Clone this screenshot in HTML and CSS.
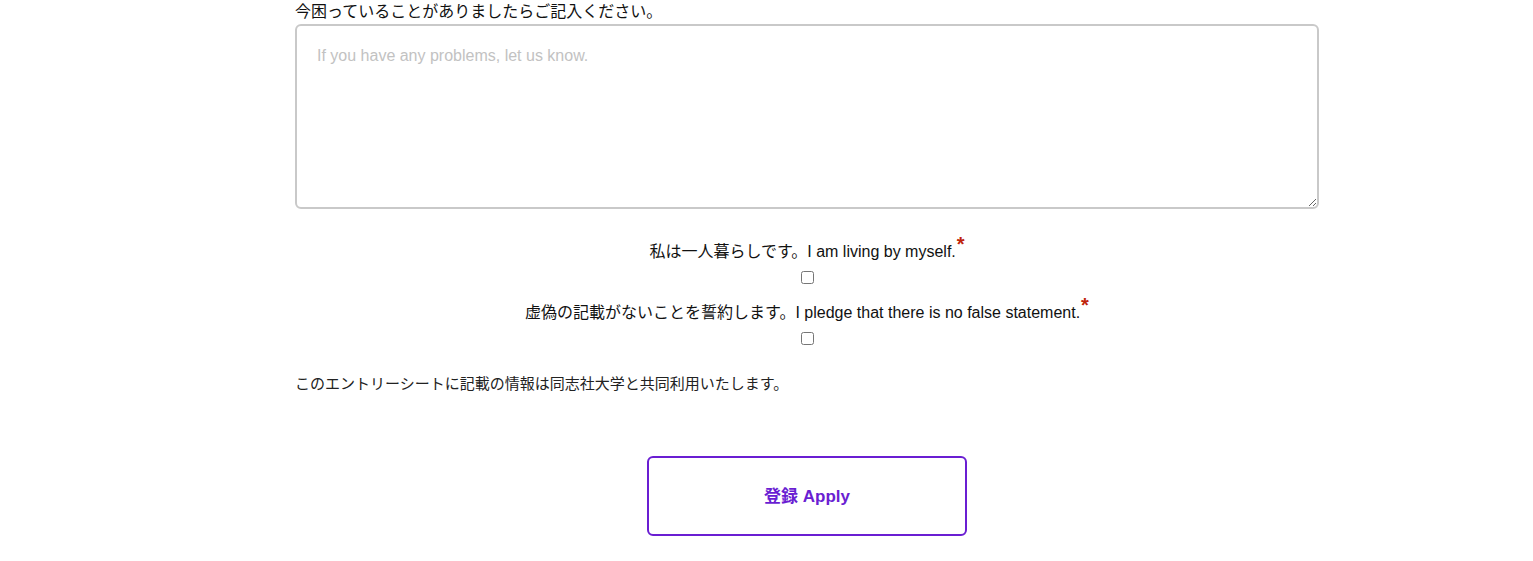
FILE: index.html
```html
<!DOCTYPE html>
<html lang="ja">
<head>
<meta charset="utf-8">
<link rel="stylesheet" href="styles.css">
</head>
<body>
<div class="page">
  <form class="form">
    <label class="field-label" for="problems">今困っていることがありましたらご記入ください。</label>
    <textarea id="problems" class="textarea" placeholder="If you have any problems, let us know."></textarea>

    <div class="check-group first">
      <label class="check-label" for="alone">私は一人暮らしです。I am living by myself.<span class="req">*</span></label>
      <input type="checkbox" id="alone" class="check">
    </div>

    <div class="check-group">
      <label class="check-label" for="pledge">虚偽の記載がないことを誓約します。I pledge that there is no false statement.<span class="req">*</span></label>
      <input type="checkbox" id="pledge" class="check">
    </div>

    <p class="note">このエントリーシートに記載の情報は同志社大学と共同利用いたします。</p>

    <div class="actions">
      <button type="button" class="apply">登録 Apply</button>
    </div>
  </form>
</div>
</body>
</html>
```

FILE: styles.css
```css
html, body {
  margin: 0;
  padding: 0;
  background: #ffffff;
}

body {
  font-family: "Liberation Sans", "Noto Sans CJK JP", sans-serif;
  color: #111111;
}

.page {
  padding-left: 295px;
}

.form {
  width: 1024px;
  display: flex;
  flex-direction: column;
}

.field-label {
  display: block;
  font-size: 16px;
  line-height: 22px;
  height: 22px;
  padding-top: 1px;
}

.textarea {
  margin-top: 1px;
  box-sizing: border-box;
  width: 1024px;
  height: 185px;
  border: 2px solid #c9c9c9;
  border-radius: 6px;
  padding: 20px 20px;
  font-family: "Liberation Sans", "Noto Sans CJK JP", sans-serif;
  font-size: 16px;
  line-height: 20px;
  color: #222;
  resize: vertical;
  outline: none;
}

.textarea::placeholder {
  color: #c2c2c2;
}

.check-group {
  display: flex;
  flex-direction: column;
  align-items: center;
  margin-top: 18px;
}

.check-group.first {
  margin-top: 32px;
}

.check-label {
  font-size: 16px;
  line-height: 22px;
  color: #111;
}

.req {
  color: #c0240c;
  font-size: 20px;
  font-weight: bold;
  line-height: 0;
  position: relative;
  top: -6px;
  margin-left: 1px;
}

.check {
  width: 13px;
  height: 13px;
  margin: 8px 0 0 0;
}

.note {
  margin: 28px 0 0 0;
  font-size: 15px;
  line-height: 22px;
  color: #222;
}

.actions {
  display: flex;
  justify-content: center;
  margin-top: 61px;
}

.apply {
  box-sizing: border-box;
  width: 320px;
  height: 80px;
  padding: 0 0 4px 0;
  background: #ffffff;
  border: 2px solid #6a1ed2;
  border-radius: 6px;
  color: #6a1ed2;
  font-family: "Liberation Sans", "Noto Sans CJK JP", sans-serif;
  font-size: 17px;
  font-weight: bold;
  cursor: pointer;
}
```
